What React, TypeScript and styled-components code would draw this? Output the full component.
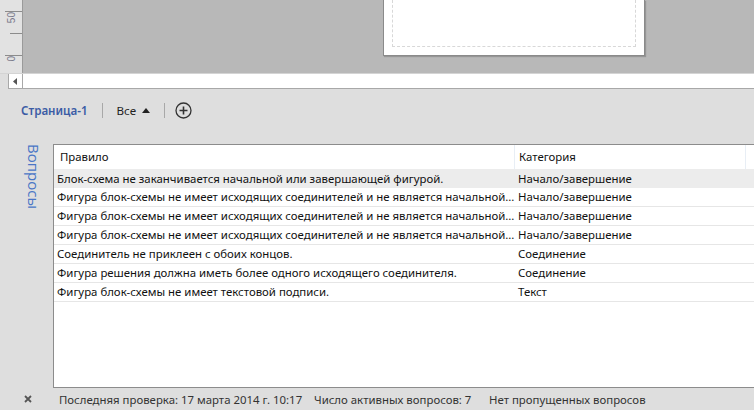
import React from "react";
import styled, { createGlobalStyle } from "styled-components";

const Global = createGlobalStyle`
  html, body { margin: 0; padding: 0; background: #dedede; }
  body { font-family: "Noto Sans", "Open Sans", sans-serif; }
  * { box-sizing: border-box; }
`;

const Root = styled.div`
  width: 754px;
  height: 410px;
  overflow: hidden;
  display: flex;
  flex-direction: column;
  background: #dedede;
  color: #111;
  font-size: 11.4px;
`;

const TopArea = styled.div`
  height: 74px;
  display: flex;
  border-bottom: 1px solid #d4d4d4;
`;

const Ruler = styled.div`
  width: 23px;
  flex: none;
  background: #e2e2e2;
  border-right: 1px solid #9a9a9a;
  position: relative;
`;

const Tick = styled.div<{ $top: number; $len: number }>`
  position: absolute;
  right: 0;
  top: ${(p) => p.$top}px;
  width: ${(p) => p.$len}px;
  height: 1px;
  background: #8c8c8c;
`;

const RulerLabel = styled.span<{ $top: number }>`
  position: absolute;
  left: 7px;
  top: ${(p) => p.$top}px;
  writing-mode: vertical-rl;
  transform: rotate(180deg);
  font-family: "Liberation Sans", sans-serif;
  font-size: 10px;
  line-height: 9px;
  color: #7a7a8c;
`;

const Canvas = styled.div`
  flex: 1;
  background: #b8b8b8;
  display: flex;
  align-items: flex-start;
  padding-left: 360px;
`;

const Page = styled.div`
  width: 262px;
  height: 56px;
  background: #fff;
  border: 1px solid #8a8a8a;
  border-top: none;
  box-shadow: 1px 1px 1px rgba(0, 0, 0, 0.18);
  padding: 0 8px 8px 8px;
`;

const PageMargin = styled.div`
  height: 100%;
  border: 1px dashed #d8d8d8;
  border-top: none;
`;

const ScrollRow = styled.div`
  height: 15px;
  display: flex;
  padding-left: 8px;
`;

const Scrollbar = styled.div`
  flex: 1;
  display: flex;
  background: #fff;
  border-left: 1px solid #a8a8a8;
  border-bottom: 1px solid #a8a8a8;
`;

const ScrollButton = styled.div`
  width: 14px;
  border-right: 1px solid #a8a8a8;
  display: flex;
  align-items: center;
  justify-content: center;
  svg { display: block; }
`;

const TabsRow = styled.div`
  height: 41px;
  display: flex;
  align-items: center;
  padding-left: 21px;
  padding-top: 1px;
`;

const PageTab = styled.span`
  color: #3b5ca5;
  font-weight: 600;
  font-size: 11.6px;
`;

const Separator = styled.div`
  width: 1px;
  height: 15px;
  background: #a8a8a8;
  margin: 0 14px;
`;

const AllTab = styled.span`
  display: flex;
  align-items: center;
  gap: 6px;
  font-size: 11.6px;
  color: #222;
`;

const IconBox = styled.span`
  display: flex;
  align-items: center;
  margin-left: -4px;
  svg { display: block; }
`;

const Panel = styled.div`
  flex: 1;
  display: flex;
  padding-top: 14px;
  min-height: 0;
`;

const SideTitle = styled.div`
  width: 53px;
  flex: none;
  display: flex;
  justify-content: flex-start;
  padding-left: 24px;
`;

const VerticalText = styled.span`
  writing-mode: vertical-rl;
  font-family: "Open Sans", "Noto Sans", sans-serif;
  font-weight: 400;
  font-size: 15px;
  line-height: 19px;
  color: #4a76c6;
`;

const Table = styled.div`
  flex: 1;
  background: #fff;
  border: 1px solid #8c8c8c;
  border-right: none;
  display: flex;
  flex-direction: column;
`;

const GridRow = styled.div<{ $header?: boolean; $selected?: boolean }>`
  display: grid;
  grid-template-columns: 461px 231px 1fr;
  height: ${(p) => (p.$header ? 24 : 19)}px;
  align-items: center;
  background: ${(p) => (p.$selected ? "#ececec" : "#fff")};
  border-bottom: ${(p) => (p.$header || p.$selected ? "none" : "1px solid #e6e6e6")};
  line-height: 18px;
`;

const Cell = styled.div<{ $pad: number; $divider?: boolean }>`
  height: 100%;
  display: flex;
  align-items: center;
  padding-left: ${(p) => p.$pad}px;
  white-space: nowrap;
  overflow: hidden;
  border-right: ${(p) => (p.$divider ? "1px solid #e8eef5" : "none")};
`;

const StatusBar = styled.div`
  height: 22px;
  display: flex;
  align-items: center;
  color: #333;
`;

const CloseBox = styled.div`
  width: 59px;
  padding-left: 24px;
  display: flex;
  align-items: center;
  svg { display: block; }
`;

const StatusItems = styled.div`
  display: grid;
  grid-template-columns: 255px 175px auto;
  white-space: nowrap;
`;

const rows: [string, string][] = [
  ["Блок-схема не заканчивается начальной или завершающей фигурой.", "Начало/завершение"],
  ["Фигура блок-схемы не имеет исходящих соединителей и не является начальной...", "Начало/завершение"],
  ["Фигура блок-схемы не имеет исходящих соединителей и не является начальной...", "Начало/завершение"],
  ["Фигура блок-схемы не имеет исходящих соединителей и не является начальной...", "Начало/завершение"],
  ["Соединитель не приклеен с обоих концов.", "Соединение"],
  ["Фигура решения должна иметь более одного исходящего соединителя.", "Соединение"],
  ["Фигура блок-схемы не имеет текстовой подписи.", "Текст"],
];

export default function App() {
  return (
    <Root>
      <Global />
      <TopArea>
        <Ruler>
          <Tick $top={11} $len={17} />
          <RulerLabel $top={12}>50</RulerLabel>
          <Tick $top={33} $len={12} />
          <Tick $top={55} $len={17} />
          <RulerLabel $top={56}>0</RulerLabel>
        </Ruler>
        <Canvas>
          <Page>
            <PageMargin />
          </Page>
        </Canvas>
      </TopArea>
      <ScrollRow>
        <Scrollbar>
          <ScrollButton>
            <svg width="5" height="7" viewBox="0 0 5 7">
              <path d="M4 0 L0 3.5 L4 7 Z" fill="#555" />
            </svg>
          </ScrollButton>
        </Scrollbar>
      </ScrollRow>
      <TabsRow>
        <PageTab>Страница-1</PageTab>
        <Separator />
        <AllTab>
          Все
          <svg width="8" height="5" viewBox="0 0 8 5">
            <path d="M0 5 L4 0 L8 5 Z" fill="#222" />
          </svg>
        </AllTab>
        <Separator />
        <IconBox>
          <svg width="17" height="17" viewBox="0 0 17 17">
            <circle cx="8.5" cy="8.5" r="7.5" fill="none" stroke="#333" strokeWidth="1.3" />
            <path d="M8.5 4.5 V12.5 M4.5 8.5 H12.5" stroke="#333" strokeWidth="1.6" />
          </svg>
        </IconBox>
      </TabsRow>
      <Panel>
        <SideTitle>
          <VerticalText>Вопросы</VerticalText>
        </SideTitle>
        <Table>
          <GridRow $header>
            <Cell $pad={6} $divider>Правило</Cell>
            <Cell $pad={4} $divider>Категория</Cell>
            <Cell $pad={0} />
          </GridRow>
          {rows.map(([rule, cat], i) => (
            <GridRow key={i} $selected={i === 0}>
              <Cell $pad={3}>{rule}</Cell>
              <Cell $pad={3}>{cat}</Cell>
              <Cell $pad={0} />
            </GridRow>
          ))}
        </Table>
      </Panel>
      <StatusBar>
        <CloseBox>
          <svg width="8" height="8" viewBox="0 0 8 8">
            <path d="M1 1 L7 7 M7 1 L1 7" stroke="#555" strokeWidth="1.8" />
          </svg>
        </CloseBox>
        <StatusItems>
          <span>Последняя проверка: 17 марта 2014 г. 10:17</span>
          <span>Число активных вопросов: 7</span>
          <span>Нет пропущенных вопросов</span>
        </StatusItems>
      </StatusBar>
    </Root>
  );
}
